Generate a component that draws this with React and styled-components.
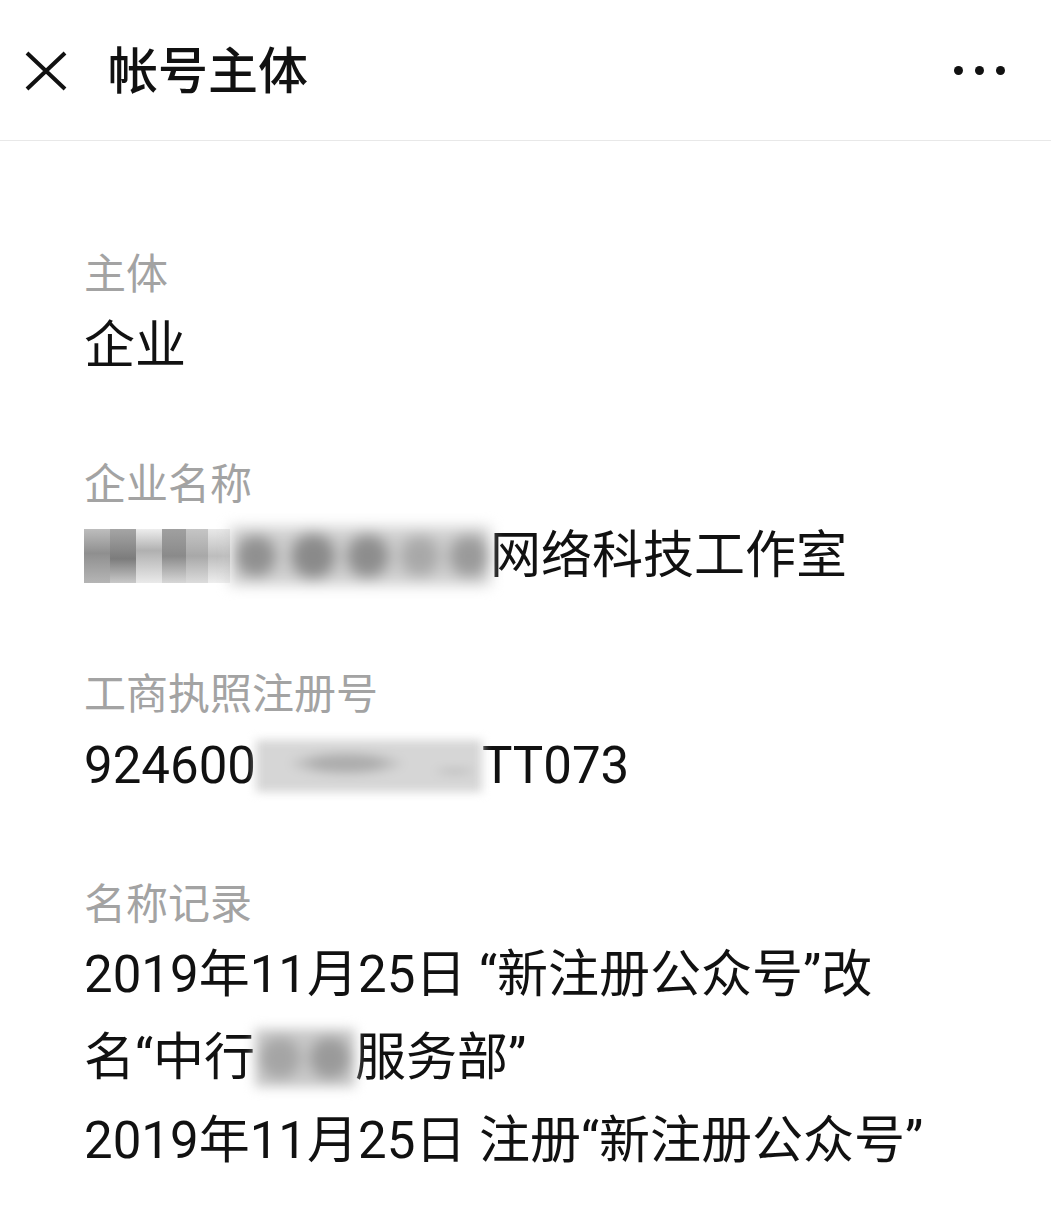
import React from "react";
import styled, { createGlobalStyle } from "styled-components";

const Global = createGlobalStyle`
  html, body { margin: 0; padding: 0; background: #fff; }
  body { font-family: Roboto, "Noto Sans CJK SC", sans-serif; color: #111; }
`;

const Page = styled.div`
  width: 1051px;
  min-height: 1219px;
  background: #fff;
`;

const Header = styled.header`
  height: 141px;
  border-bottom: 1px solid #e8e8e8;
  display: flex;
  align-items: center;
  padding: 0 24px 0 24px;
  box-sizing: border-box;
`;

const IconButton = styled.div`
  width: 44px;
  height: 44px;
  display: flex;
  align-items: center;
  justify-content: center;
`;

const Title = styled.h1`
  margin: 0 0 0 40px;
  font-size: 50px;
  font-weight: 500;
  letter-spacing: 0;
  color: #111;
  flex: 1;
  line-height: 1;
  position: relative;
  top: 2px;
`;

const Dots = styled.div`
  display: flex;
  gap: 12px;
  margin-right: 22px;
`;

const Dot = styled.span`
  width: 9px;
  height: 9px;
  border-radius: 50%;
  background: #111;
`;

const Content = styled.main`
  padding: 106px 0 0 84px;
  display: flex;
  flex-direction: column;
  gap: 69px;
`;

const Section = styled.section`
  display: flex;
  flex-direction: column;
`;

const Label = styled.div`
  font-size: 42px;
  line-height: 56px;
  color: #a3a3a3;
`;

const Value = styled.div`
  font-size: 51px;
  line-height: 85px;
  color: #111;
  white-space: nowrap;
`;

const RecordLine = styled.div`
  font-size: 51px;
  line-height: 83px;
  color: #111;
  white-space: nowrap;
`;

const Blur = styled.span`
  display: inline-block;
  vertical-align: middle;
  width: ${(p) => p.$w}px;
  height: ${(p) => p.$h}px;
  background: ${(p) => p.$bg};
  filter: blur(${(p) => p.$blur}px);
  position: relative;
  top: -4px;
`;

const Mosaic = styled.span`
  display: inline-flex;
  vertical-align: middle;
  position: relative;
  top: -4px;
`;

const Cell = styled.span`
  display: inline-block;
  width: ${(p) => p.$w}px;
  height: 54px;
  background: ${(p) => p.$bg};
`;

export default function App() {
  return (
    <Page>
      <Global />
      <Header>
        <IconButton>
          <svg width="44" height="44" viewBox="0 0 44 44">
            <path d="M3 5 L41 41 M41 5 L3 41" stroke="#111" strokeWidth="4" strokeLinecap="butt" />
          </svg>
        </IconButton>
        <Title>帐号主体</Title>
        <Dots>
          <Dot />
          <Dot />
          <Dot />
        </Dots>
      </Header>
      <Content>
        <Section>
          <Label>主体</Label>
          <Value>企业</Value>
        </Section>
        <Section>
          <Label>企业名称</Label>
          <Value>
            <Mosaic>
              <Cell $w={26} $bg="linear-gradient(#bdbdbd, #8f8f8f 45%, #b5b5b5)" />
              <Cell $w={26} $bg="linear-gradient(#a5a5a5, #7c7c7c 55%, #c9c9c9)" />
              <Cell $w={26} $bg="linear-gradient(#ededed, #b0b0b0 40%, #eaeaea)" />
              <Cell $w={24} $bg="linear-gradient(#a0a0a0, #8a8a8a 50%, #d7d7d7)" />
              <Cell $w={22} $bg="linear-gradient(#c5c5c5, #a8a8a8 50%, #dcdcdc)" />
              <Cell $w={22} $bg="linear-gradient(#e8e8e8, #bdbdbd 50%, #eeeeee)" />
            </Mosaic>
            <Blur
              $w={260}
              $h={58}
              $blur={7}
              $bg="radial-gradient(circle at 10% 50%, #909090 0 16px, transparent 24px), radial-gradient(circle at 32% 50%, #8a8a8a 0 18px, transparent 26px), radial-gradient(circle at 53% 50%, #8d8d8d 0 17px, transparent 25px), radial-gradient(circle at 73% 50%, #a8a8a8 0 15px, transparent 24px), radial-gradient(circle at 92% 50%, #9a9a9a 0 16px, transparent 24px), #cfcfcf"
            />
            网络科技工作室
          </Value>
        </Section>
        <Section>
          <Label>工商执照注册号</Label>
          <Value>
            924600
            <Blur
              $w={226}
              $h={52}
              $blur={5}
              $bg="radial-gradient(ellipse at 40% 45%, #adadad 0 30px, transparent 60px), radial-gradient(ellipse at 88% 60%, #bcbcbc 0 10px, transparent 24px), #d6d6d6"
            />
            TT073
          </Value>
        </Section>
        <Section>
          <Label>名称记录</Label>
          <RecordLine>2019年11月25日 “新注册公众号”改</RecordLine>
          <RecordLine>
            名“中行
            <Blur
              $w={100}
              $h={58}
              $blur={6}
              $bg="radial-gradient(circle at 25% 50%, #a5a5a5 0 14px, transparent 26px), radial-gradient(circle at 75% 50%, #9a9a9a 0 14px, transparent 26px), #c8c8c8"
            />
            服务部”
          </RecordLine>
          <RecordLine>2019年11月25日 注册“新注册公众号”</RecordLine>
        </Section>
      </Content>
    </Page>
  );
}
